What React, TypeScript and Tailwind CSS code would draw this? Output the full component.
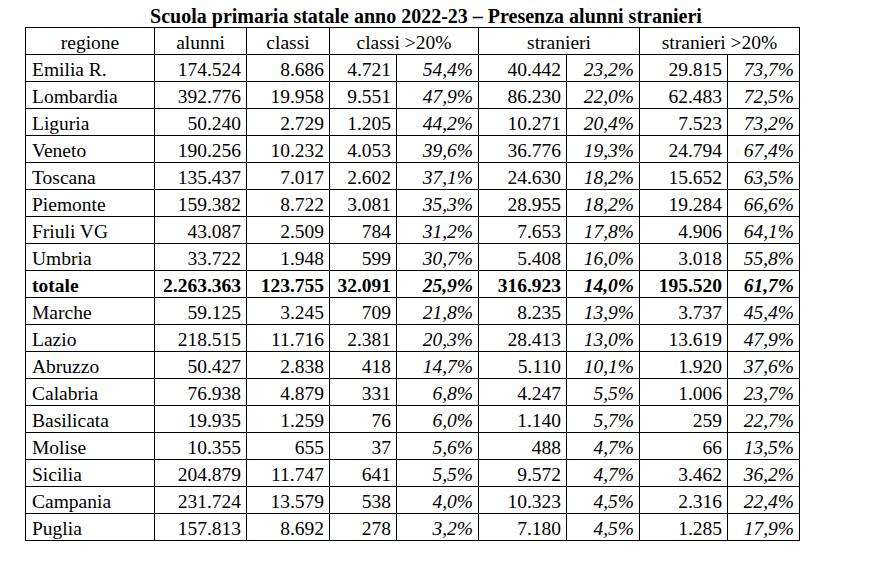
const rows: [string, string, string, string, string, string, string, string, string][] = [
  ["Emilia R.", "174.524", "8.686", "4.721", "54,4%", "40.442", "23,2%", "29.815", "73,7%"],
  ["Lombardia", "392.776", "19.958", "9.551", "47,9%", "86.230", "22,0%", "62.483", "72,5%"],
  ["Liguria", "50.240", "2.729", "1.205", "44,2%", "10.271", "20,4%", "7.523", "73,2%"],
  ["Veneto", "190.256", "10.232", "4.053", "39,6%", "36.776", "19,3%", "24.794", "67,4%"],
  ["Toscana", "135.437", "7.017", "2.602", "37,1%", "24.630", "18,2%", "15.652", "63,5%"],
  ["Piemonte", "159.382", "8.722", "3.081", "35,3%", "28.955", "18,2%", "19.284", "66,6%"],
  ["Friuli VG", "43.087", "2.509", "784", "31,2%", "7.653", "17,8%", "4.906", "64,1%"],
  ["Umbria", "33.722", "1.948", "599", "30,7%", "5.408", "16,0%", "3.018", "55,8%"],
  ["totale", "2.263.363", "123.755", "32.091", "25,9%", "316.923", "14,0%", "195.520", "61,7%"],
  ["Marche", "59.125", "3.245", "709", "21,8%", "8.235", "13,9%", "3.737", "45,4%"],
  ["Lazio", "218.515", "11.716", "2.381", "20,3%", "28.413", "13,0%", "13.619", "47,9%"],
  ["Abruzzo", "50.427", "2.838", "418", "14,7%", "5.110", "10,1%", "1.920", "37,6%"],
  ["Calabria", "76.938", "4.879", "331", "6,8%", "4.247", "5,5%", "1.006", "23,7%"],
  ["Basilicata", "19.935", "1.259", "76", "6,0%", "1.140", "5,7%", "259", "22,7%"],
  ["Molise", "10.355", "655", "37", "5,6%", "488", "4,7%", "66", "13,5%"],
  ["Sicilia", "204.879", "11.747", "641", "5,5%", "9.572", "4,7%", "3.462", "36,2%"],
  ["Campania", "231.724", "13.579", "538", "4,0%", "10.323", "4,5%", "2.316", "22,4%"],
  ["Puglia", "157.813", "8.692", "278", "3,2%", "7.180", "4,5%", "1.285", "17,9%"],
];

const cell = "border border-black h-[27px] pt-[4px] pb-0 leading-[22px] align-top";

export default function App() {
  return (
    <div className="min-h-[563px] w-[882px] bg-white text-black font-['Liberation_Serif','Times_New_Roman',serif] text-[19.5px]">
      <div className="pl-[25px] pt-[5px]">
        <h1 className="w-[774px] pl-[28px] text-center text-[20px] font-bold leading-[22px]">
          Scuola primaria statale anno 2022-23 – Presenza alunni stranieri
        </h1>
        <table className="table-fixed border-collapse w-[774px]">
          <colgroup>
            <col className="w-[129px]" />
            <col className="w-[92px]" />
            <col className="w-[83px]" />
            <col className="w-[67px]" />
            <col className="w-[82px]" />
            <col className="w-[88px]" />
            <col className="w-[73px]" />
            <col className="w-[88px]" />
            <col className="w-[72px]" />
          </colgroup>
          <thead>
            <tr>
              <th className={`${cell} font-normal text-center`}>regione</th>
              <th className={`${cell} font-normal text-center`}>alunni</th>
              <th className={`${cell} font-normal text-center`}>classi</th>
              <th colSpan={2} className={`${cell} font-normal text-center`}>classi &gt;20%</th>
              <th colSpan={2} className={`${cell} font-normal text-center`}>stranieri</th>
              <th colSpan={2} className={`${cell} font-normal text-center`}>stranieri &gt;20%</th>
            </tr>
          </thead>
          <tbody>
            {rows.map((r) => {
              const bold = r[0] === "totale" ? "font-bold" : "";
              return (
                <tr key={r[0]}>
                  {r.map((v, i) => (
                    <td
                      key={i}
                      className={`${cell} ${bold} ${
                        i === 0 ? "text-left pl-[6px]" : "text-right pr-[5px]"
                      } ${i === 4 || i === 6 || i === 8 ? "italic" : ""}`}
                    >
                      {v}
                    </td>
                  ))}
                </tr>
              );
            })}
          </tbody>
        </table>
      </div>
    </div>
  );
}
